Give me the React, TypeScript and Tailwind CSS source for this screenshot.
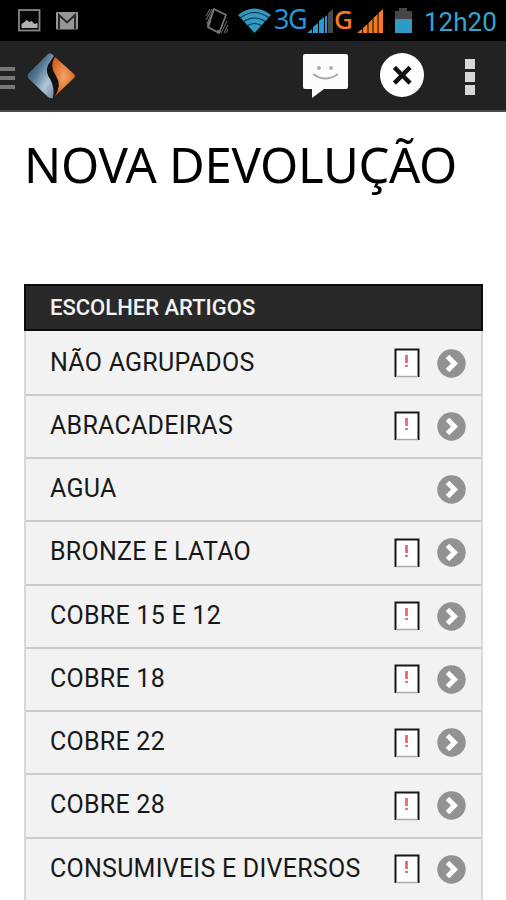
const articles = [
  { name: 'NÃO AGRUPADOS', alert: true },
  { name: 'ABRACADEIRAS', alert: true },
  { name: 'AGUA', alert: false },
  { name: 'BRONZE E LATAO', alert: true },
  { name: 'COBRE 15 E 12', alert: true },
  { name: 'COBRE 18', alert: true },
  { name: 'COBRE 22', alert: true },
  { name: 'COBRE 28', alert: true },
  { name: 'CONSUMIVEIS E DIVERSOS', alert: true },
];

const StatusBar = () => (
  <div className="flex h-[41px] shrink-0 items-center bg-black">
    {/* Notifications */}
    <svg className="ml-[18px] h-[23px] w-[23px]" viewBox="0 0 23 23">
      <rect x="1" y="1" width="20.5" height="20.5" fill="#080808" stroke="#858585" strokeWidth="1.8" />
      <path d="M3.5 19v-4l3-2 2-2 3 2 2-1 3 3 3-1v5z" fill="#b2b2b2" />
    </svg>
    <svg className="ml-[15px] h-[18px] w-[22px]" viewBox="0 0 22 18">
      <rect width="22" height="17.5" rx="1" fill="#969696" />
      <path d="M3 17V3l8 7.500 8-7.500V17" fill="none" stroke="#292929" strokeWidth="2" />
    </svg>

    {/* Vibrate mode */}
    <svg className="ml-[127px] h-[28px] w-[24px]" viewBox="0 0 24 28" fill="none" stroke="#777">
      <path d="M9 2l12 6-7 18-11-6z" strokeWidth="1.700" />
      <path d="M12 24l3 1M3 19l2-5" strokeWidth="2.500" />
      <path d="M1 9l4-7M1 13l6-11M2 17L8 3M16 26l6-12M19 26l4-8M21 26l2-4" strokeWidth="1" />
    </svg>
    <svg className="ml-[9px] h-[25px] w-[33px]" viewBox="0 0 33 25">
      <path d="M0 7Q16.500-6 33 7L16.500 25z" fill="#319ac2" />
      <path d="M2 10Q16.500-1 31 10M5 14q11.500-8 23 0M9 18q7.500-5 15 0" fill="none" stroke="#092b38" strokeWidth="1.200" />
    </svg>
    <span className="ml-[3px] w-[32px] whitespace-nowrap pb-1 font-['Noto_Sans',sans-serif] text-[27px] leading-none tracking-[-1.5px] text-[#2495da]">3G</span>
    <svg className="ml-[1px] h-[26px] w-[26px]" viewBox="0 0 26 26">
      <path d="M0 25l5-4v4zM6 19l5-4v10H6zM12 13l5-4v16h-5z" fill="#249cda" />
      <path d="M18 9l2-2v18h-2z" fill="#249cda" />
      <path d="M21 5l5-4v24h-5z" fill="#494949" />
    </svg>
    <span className="ml-px w-[20px] pb-1 font-['Noto_Sans',sans-serif] text-[26px] leading-none font-medium text-[#f57b20]">G</span>
    <svg className="ml-[3px] h-[26px] w-[26px]" viewBox="0 0 26 26" fill="#f57b20">
      <path d="M0 25l5-4v4zM6 20l4.500-4v9H6zM11.500 15l4-4v14h-4zM16.500 10l4-4v19h-4zM21.500 5l4.500-4v24h-4.500z" />
    </svg>
    <svg className="ml-[12px] h-[25px] w-[17px]" viewBox="0 0 17 25">
      <path d="M0 3h4V0h8v3h5v22H0z" fill="#454545" />
      <path d="M0 11h17v14H0z" fill="#319ac2" />
    </svg>
    <span className="ml-[12px] whitespace-nowrap pt-0.5 font-[Roboto,sans-serif] text-[26px] leading-none text-[#33a5d2]">12h20</span>
  </div>
);

const ActionBar = () => (
  <div className="flex h-[71px] shrink-0 items-center border-b-2 border-b-[#4a4a4a] bg-[#222]">
    <div className="flex w-[15px] flex-col gap-[5px] pt-1">
      <div className="h-1 bg-[#777]" />
      <div className="h-1 bg-[#777]" />
      <div className="h-1 bg-[#777]" />
    </div>
    <svg className="ml-[12px] h-[48px] w-[49px]" viewBox="0 0 49 48">
      <defs>
        <linearGradient id="steel" x2="1" y2="1">
          <stop stopColor="#24435f" />
          <stop offset=".4" stopColor="#537693" />
          <stop offset=".7" stopColor="#b1c7d8" />
          <stop offset="1" stopColor="#6c8597" />
        </linearGradient>
        <radialGradient id="flame">
          <stop stopColor="#f5a368" />
          <stop offset="1" stopColor="#d76722" />
        </radialGradient>
      </defs>
      <path d="M24 1L48 24 25 47 1 26q-1-2 0-4z" fill="#111" />
      <path d="M21 2q3-2 6 2l-6 9q-3 7 2 14 5 8 3 19-3 1-5-1L1 26q-1-2 0-4z" fill="url(#steel)" />
      <path d="M28 5l19 17q2 2 0 4L28 44q7-11 1-20-7-10-1-19z" fill="url(#flame)" />
    </svg>
    <svg className="ml-[226px] h-[48px] w-[47px]" viewBox="0 0 47 48">
      <path d="M3 2h41q2 0 2 2v31q0 2-2 2H22L10 46V37H3q-2 0-2-2V4q0-2 2-2z" fill="#fcfcfc" />
      <circle cx="17" cy="16" r="1.900" fill="#aaa" />
      <circle cx="29" cy="16" r="1.900" fill="#aaa" />
      <path d="M11 22q12 9 25 0" fill="none" stroke="#aaa" strokeWidth="2" />
    </svg>
    <svg className="mb-0.5 ml-[30px] h-[46px] w-[46px]" viewBox="0 0 46 46">
      <circle cx="23" cy="23" r="22" fill="#fff" />
      <path d="M17 17l12.500 12.500M29.500 17L17 29.500" fill="none" stroke="#111" strokeWidth="4.500" strokeLinecap="square" />
    </svg>
    <div className="ml-[40px] flex w-[10px] flex-col gap-[3px] pt-0.5">
      <div className="h-[10px] bg-[#d6d6d6]" />
      <div className="h-[10px] bg-[#d6d6d6]" />
      <div className="h-[10px] bg-[#d6d6d6]" />
    </div>
  </div>
);

const AlertIcon = () => (
  <svg className="h-[30px] w-[26px]" viewBox="0 0 26 30">
    <rect x="1" y="1" width="24" height="28" fill="#fff" />
    <path d="M1.500 29V1.500h23V29" fill="none" stroke="#171717" strokeWidth="2" />
    <path d="M2 28.500h22" stroke="#aaa" strokeWidth="1.500" />
    <path d="M12.500 7v8M12.500 17v2" stroke="#ed6870" strokeWidth="2.800" />
  </svg>
);

const ChevronIcon = () => (
  <svg className="ml-[17px] h-[29px] w-[29px]" viewBox="0 0 29 29">
    <circle cx="14.500" cy="14.500" r="14.200" fill="#929292" />
    <path d="M10.500 7.500l7 7-7 7" fill="none" stroke="#fff" strokeWidth="5" />
  </svg>
);

export default function App() {
  return (
    <div className="flex h-[900px] w-[506px] flex-col overflow-hidden bg-white">
      <StatusBar />
      <ActionBar />
      <main className="px-6 pt-6">
        <h1 className="h-[148px] whitespace-nowrap font-['Noto_Sans',sans-serif] text-[49px] leading-[56px] tracking-[-0.3px] text-black">NOVA DEVOLUÇÃO</h1>
        <section className="w-[459px]">
          <h2 className="flex h-[47px] items-center border-2 border-[#0b0b0b] bg-[#292929] pl-6 font-[Roboto,sans-serif] text-[22px] font-medium text-[#f3f3f3]">
            ESCOLHER ARTIGOS
          </h2>
          <ul className="border-x-2 border-[#d8d8d8] bg-[#f2f2f2] pt-[1.5px]">
            {articles.map((article) => (
              <li key={article.name} className="flex h-[63.25px] items-center border-b-2 border-[#cacaca] pr-[15px] pl-6">
                <span className="mr-auto whitespace-nowrap pb-0.5 font-[Roboto,sans-serif] text-[25px] leading-none tracking-[0.25px] text-[#181818]">{article.name}</span>
                {article.alert && <AlertIcon />}
                <ChevronIcon />
              </li>
            ))}
          </ul>
        </section>
      </main>
    </div>
  );
}
